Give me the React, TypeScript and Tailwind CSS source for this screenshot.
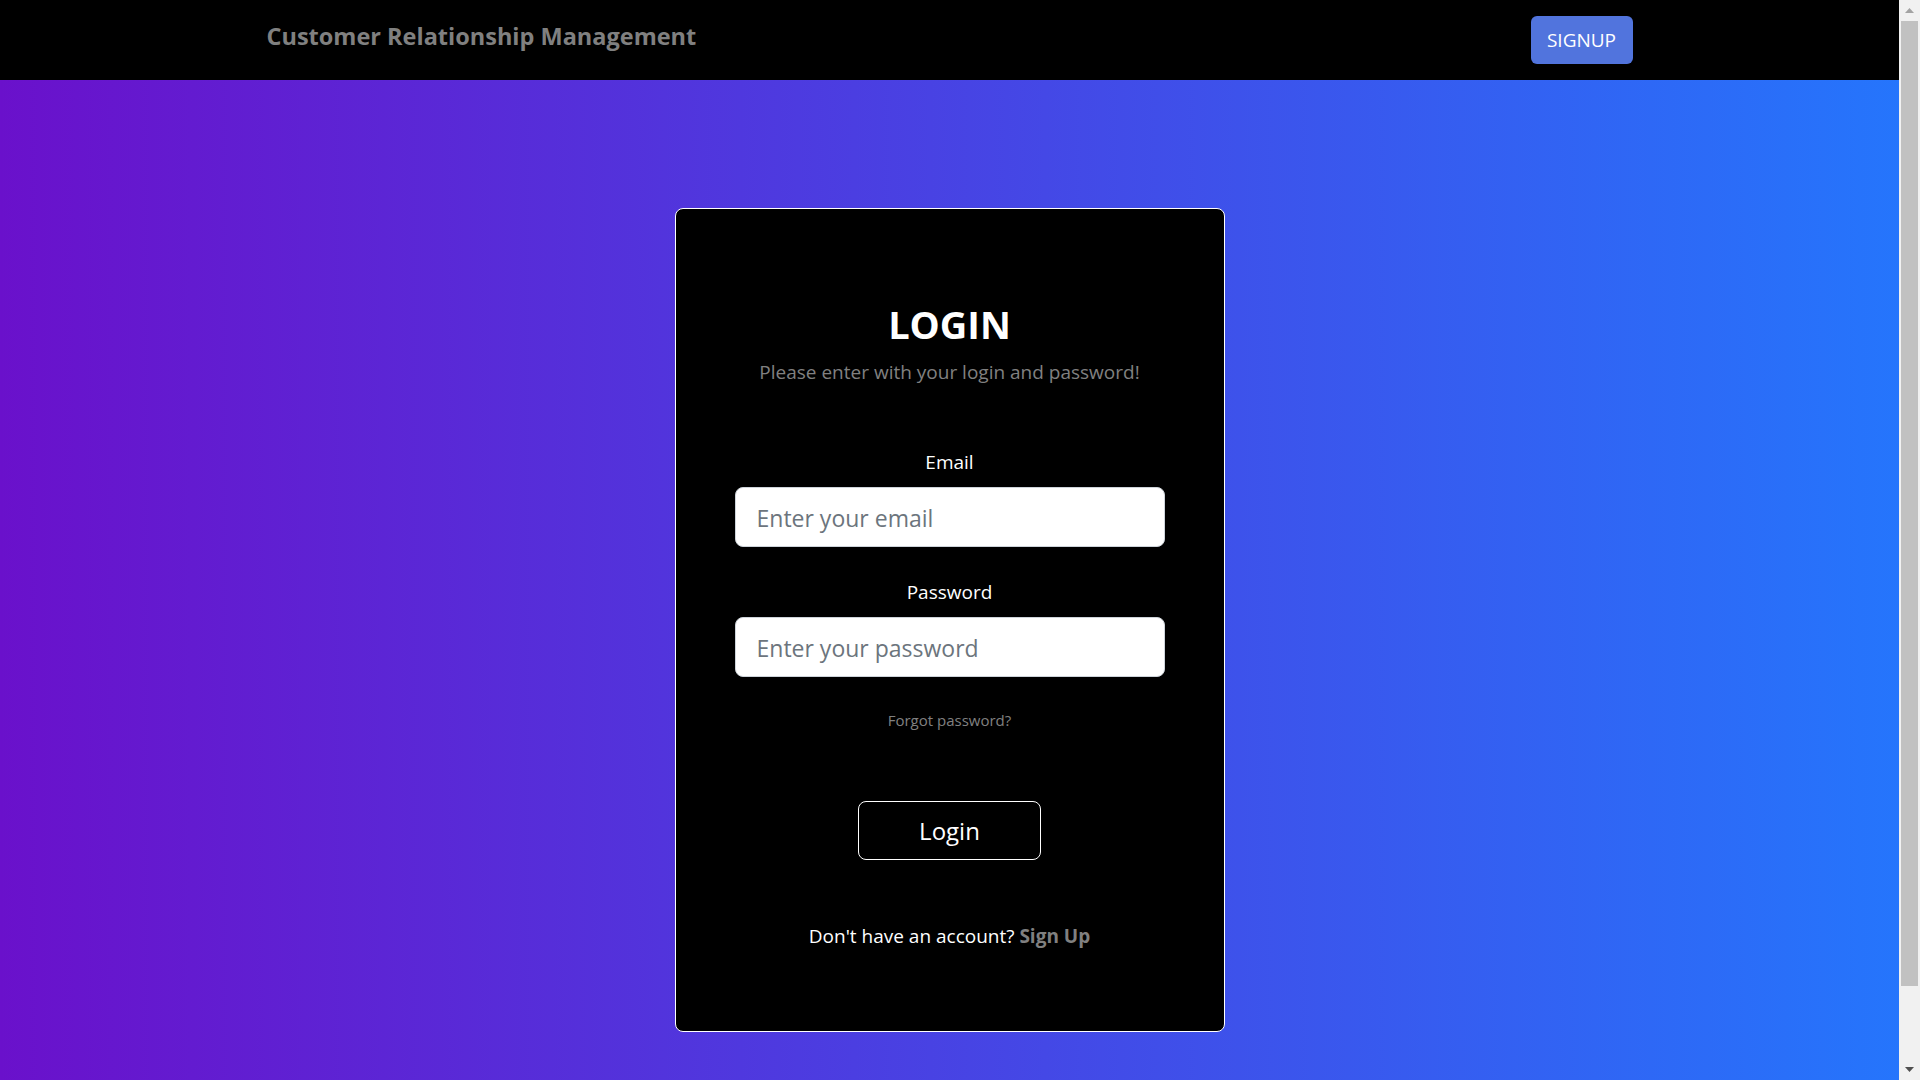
import React from "react";

function Scrollbar() {
  return (
    <div className="w-[21px] h-[1080px] sticky top-0 shrink-0 bg-[#f1f1f1] flex flex-col items-center">
      <div className="h-[21px] w-full flex items-center justify-center">
        <svg width="9" height="5" viewBox="0 0 9 5">
          <polygon points="0,5 9,5 4.5,0" fill="#a3a3a3" />
        </svg>
      </div>
      <div className="w-[17px] h-[965px] bg-[#c1c1c1]" />
      <div className="flex-1" />
      <div className="h-[21px] w-full flex items-center justify-center">
        <svg width="9" height="5" viewBox="0 0 9 5">
          <polygon points="0,0 9,0 4.5,5" fill="#505050" />
        </svg>
      </div>
    </div>
  );
}

export default function App() {
  return (
    <div className="flex items-start font-['Open_Sans',sans-serif]">
      <div className="w-[1899px] shrink-0 min-h-[1170px] flex flex-col">
        <nav className="h-[80px] bg-black shrink-0">
          <div className="w-[1366px] mx-auto h-full flex items-center justify-between">
            <span className="text-[23.5px] font-bold text-[#808080] mb-[8px] leading-[32px]">
              Customer Relationship Management
            </span>
            <button className="w-[102px] h-[48px] rounded-[6px] bg-[#5174dd] text-white text-[19px] leading-none">
              SIGNUP
            </button>
          </div>
        </nav>
        <section className="flex-1 bg-[linear-gradient(to_right,#6a11cb,#2575fc)] pt-[128px] pb-[138px] flex justify-center">
          <div className="w-[550px] h-[824px] bg-black border border-white rounded-[8px] px-[59px] pt-[91px] flex flex-col items-center text-center">
            <h2 className="text-[38px] leading-[48px] font-bold text-white uppercase">Login</h2>
            <p className="mt-[9px] text-[19px] leading-[30px] text-[#808080]">
              Please enter with your login and password!
            </p>
            <label className="mt-[60px] text-[19px] leading-[30px] text-white">Email</label>
            <input
              type="email"
              placeholder="Enter your email"
              className="mt-[10px] w-full h-[60px] bg-white border border-[#ced4da] rounded-[8px] pl-[21px] pt-[2px] text-[23px] text-black placeholder:text-[#6c757d] outline-none"
            />
            <label className="mt-[30px] text-[19px] leading-[30px] text-white">Password</label>
            <input
              type="password"
              placeholder="Enter your password"
              className="mt-[10px] w-full h-[60px] bg-white border border-[#ced4da] rounded-[8px] pl-[21px] pt-[2px] text-[23px] text-black placeholder:text-[#6c757d] outline-none"
            />
            <a className="mt-[31px] text-[15px] leading-[24px] text-[#808080]">Forgot password?</a>
            <button className="mt-[69px] w-[183px] h-[59px] border border-white rounded-[8px] text-white text-[24px]">
              Login
            </button>
            <p className="mt-[61px] text-[19px] leading-[30px] text-white">
              Don't have an account? <a className="font-bold text-[#808080]">Sign Up</a>
            </p>
          </div>
        </section>
      </div>
      <Scrollbar />
    </div>
  );
}
